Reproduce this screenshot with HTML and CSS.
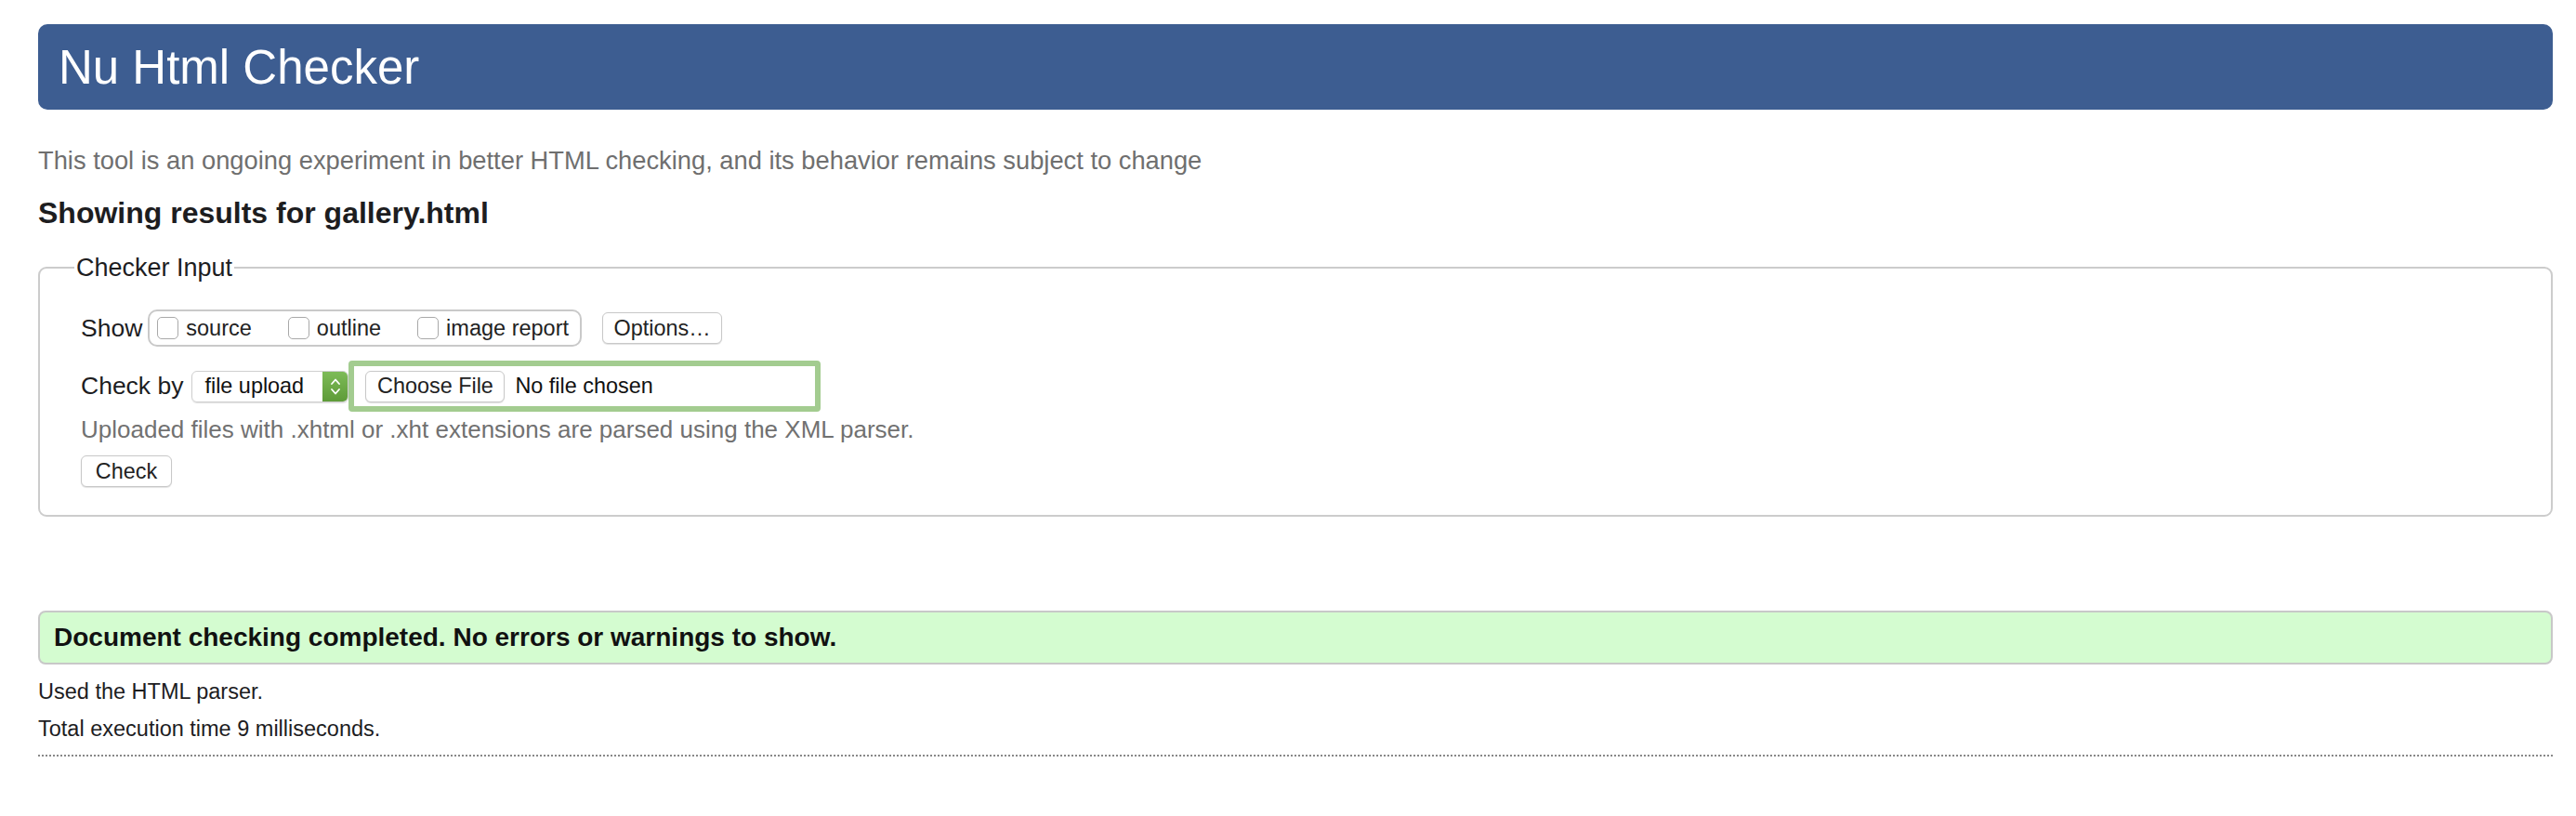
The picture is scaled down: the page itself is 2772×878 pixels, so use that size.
FILE: index.html
```html
<!DOCTYPE html>
<html lang="en">
<head>
<meta charset="utf-8">
<title>Nu Html Checker</title>
<link rel="stylesheet" href="styles.css">
</head>
<body>
<header class="masthead"><h1 class="title">Nu Html Checker</h1></header>
<p class="intro">This tool is an ongoing experiment in better HTML checking, and its behavior remains subject to change</p>
<h2 class="showing">Showing results for gallery.html</h2>
<fieldset class="checker">
  <legend class="legend">Checker Input</legend>
  <div class="row show-row">
    <span class="row-label">Show</span>
    <div class="cb-group">
      <label class="cb"><span class="box"></span>source</label>
      <label class="cb"><span class="box"></span>outline</label>
      <label class="cb"><span class="box"></span>image report</label>
    </div>
    <span class="btn options">Options…</span>
  </div>
  <div class="row by-row">
    <span class="row-label">Check by</span>
    <div class="select"><span class="select-text">file upload</span><span class="stepper"><svg width="14" height="22" viewBox="0 0 14 22"><path d="M3 8 L7 3.5 L11 8" fill="none" stroke="#fff" stroke-width="1.8" stroke-linecap="round" stroke-linejoin="round"/><path d="M3 14 L7 18.5 L11 14" fill="none" stroke="#fff" stroke-width="1.8" stroke-linecap="round" stroke-linejoin="round"/></svg></span></div>
    <div class="file-ring"><span class="btn choose">Choose File</span><span class="nofile">No file chosen</span></div>
  </div>
  <p class="hint">Uploaded files with .xhtml or .xht extensions are parsed using the XML parser.</p>
  <span class="btn check">Check</span>
</fieldset>
<div class="success">Document checking completed. No errors or warnings to show.</div>
<p class="meta">Used the HTML parser.</p>
<p class="meta">Total execution time 9 milliseconds.</p>
<hr class="dotted">
</body>
</html>
```
FILE: styles.css
```css
html { background: #fff; }
body {
  margin: 0;
  padding: 26px 25px 0 41px;
  font-family: "Liberation Sans", Arial, Helvetica, sans-serif;
  color: #222;
}
.masthead {
  height: 92px;
  background: #3d5d91;
  border-radius: 10px;
  display: flex;
  align-items: center;
  padding-left: 22px;
}
.title {
  margin: 0;
  font-weight: normal;
  font-size: 51px;
  color: #fff;
  line-height: 1;
}
.intro {
  margin: 40px 0 0;
  font-size: 27.3px;
  line-height: 30px;
  color: #6f6f6f;
}
.showing {
  margin: 21px 0 0;
  font-size: 32px;
  line-height: 40px;
  font-weight: bold;
  color: #1d1d1f;
}
.checker {
  margin: 24px 0 0;
  border: 2px solid #cccccc;
  border-radius: 9px;
  padding: 10px 44px 30px 44px;
  min-width: 0;
}
.legend {
  font-size: 27px;
  line-height: 30px;
  margin-left: -7px;
  padding: 0 2px;
  color: #1d1d1f;
}
.row {
  display: flex;
  align-items: center;
  font-size: 26.5px;
}
.row-label { color: #1d1d1f; }
.show-row { margin-top: 20px; }
.cb-group {
  display: flex;
  align-items: center;
  margin-left: 6px;
  height: 36px;
  padding: 0 12px 0 8px;
  border: 2px solid #c9c9c9;
  border-radius: 10px;
}
.cb {
  display: flex;
  align-items: center;
  font-size: 23.5px;
  color: #222;
}
.cb + .cb { margin-left: 39px; }
.box {
  width: 21px;
  height: 22px;
  border: 1.5px solid #a9a9a9;
  border-radius: 5px;
  margin-right: 8px;
  background: #fff;
}
.btn {
  display: inline-flex;
  align-items: center;
  justify-content: center;
  border: 1.5px solid #c8c8c8;
  border-radius: 6px;
  background: #fff;
  box-shadow: 0 1px 1px rgba(0,0,0,0.12);
  font-size: 23.4px;
  color: #222;
  box-sizing: border-box;
}
.options { margin-left: 22px; width: 129px; height: 34px; }
.by-row { margin-top: 15px; }
.select {
  margin-left: 9px;
  display: flex;
  height: 34px;
  width: 169px;
  border: 1.5px solid #cfcfcf;
  border-radius: 6px;
  box-sizing: border-box;
  overflow: hidden;
  box-shadow: 0 1px 1px rgba(0,0,0,0.12);
}
.select-text {
  flex: 1;
  display: flex;
  align-items: center;
  padding-left: 13px;
  font-size: 23.4px;
  color: #111;
}
.stepper {
  width: 27px;
  background: linear-gradient(#7dbb57, #5e9b38);
  display: flex;
  align-items: center;
  justify-content: center;
}
.file-ring {
  display: flex;
  align-items: center;
  width: 508px;
  height: 55px;
  box-sizing: border-box;
  border: 6px solid #a3cc90;
  border-radius: 4px;
  padding-left: 12px;
}
.choose { width: 150px; height: 34px; }
.nofile { margin-left: 11px; font-size: 23.4px; color: #111; }
.hint {
  margin: 3px 0 0;
  font-size: 26px;
  line-height: 32px;
  color: #717171;
}
.check { margin-top: 12px; width: 98px; height: 34px; }
.success {
  margin-top: 101px;
  height: 58px;
  box-sizing: border-box;
  border: 2px solid #c8c8c8;
  border-radius: 8px;
  background: #d4fcd0;
  display: flex;
  align-items: center;
  padding-left: 15px;
  font-size: 28px;
  font-weight: bold;
  color: #111;
}
.meta {
  margin: 17px 0 0;
  font-size: 23.5px;
  line-height: 24px;
  color: #1d1d1f;
}
.meta + .meta { margin-top: 16px; }
.dotted {
  margin: 16px 0 0;
  border: 0;
  border-top: 2px dotted #888;
  height: 0;
}
```
